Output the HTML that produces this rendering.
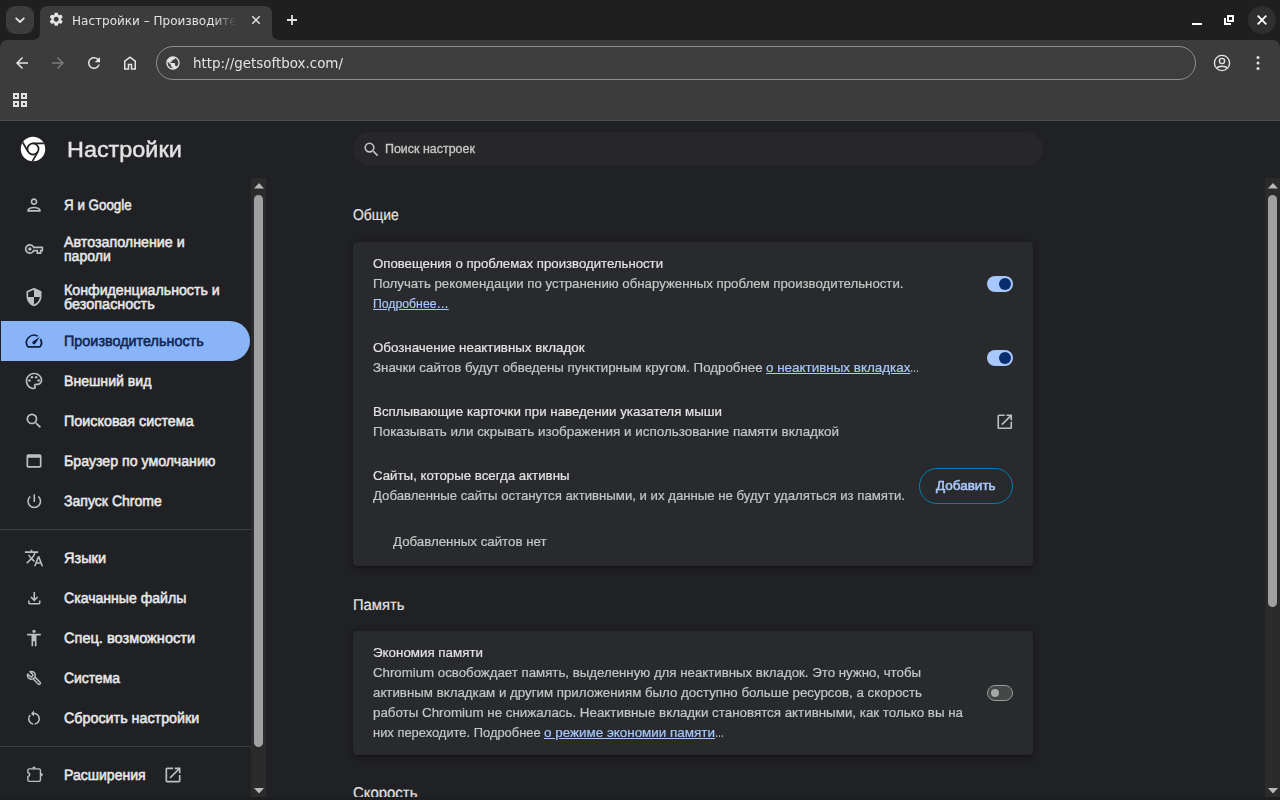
<!DOCTYPE html>
<html lang="ru"><head><meta charset="utf-8"><title>Настройки – Производительность</title>
<style>
*{box-sizing:border-box;margin:0;padding:0}
html,body{width:1280px;height:800px;overflow:hidden;background:#202124}
body{position:relative;font-family:"Liberation Sans",Arial,sans-serif;color:#e3e3e3}
.t{position:absolute;white-space:nowrap;line-height:20px;transform-origin:0 0;display:inline-block}
.fit{left:0;top:-100px;visibility:hidden}
.ic{position:absolute;display:block;overflow:visible}
.wc{position:absolute}
#tabstrip{position:absolute;left:0;top:0;width:1280px;height:40px;background:#1f1f1f}
#tabsearch{position:absolute;left:6px;top:6px;width:28px;height:28px;border-radius:9px;background:#3c3c3c}
#tabshape{position:absolute}
#tabtitlebox{position:absolute;left:71.700px;top:10px;width:166px;height:20px;overflow:hidden;-webkit-mask-image:linear-gradient(90deg,#000 0,#000 141px,transparent 164px);mask-image:linear-gradient(90deg,#000 0,#000 141px,transparent 164px)}
#closebg{position:absolute;left:1248px;top:6px;width:28px;height:28px;border-radius:14px;background:#2f2f2f}
#toolbar{position:absolute;left:0;top:40px;width:1280px;height:81px;background:#3c3c3c;border-radius:8px 8px 0 0;border-bottom:1px solid #4b4d50}
#toolbar .ic, #toolbar .t{margin-top:-40px}
#omnibox{position:absolute;left:156px;top:6px;width:1040px;height:34px;border-radius:17px;border:1px solid #8f8f8f;background:#3d3d3d}
.ui{color:#e3e3e3}
#page{position:absolute;left:0;top:0;width:1280px;height:800px}
.h1{color:#e3e3e3;-webkit-text-stroke:0.450px currentColor}
#search{position:absolute;left:352.500px;top:132px;width:690.500px;height:34px;border-radius:17px;background:#272729}
.mtxt{color:#e8e8e8}
.seltxt{color:#0e2452}
.sec{color:#c4c7c5;-webkit-text-stroke:0.200px currentColor}
.pri{color:#e3e3e3;-webkit-text-stroke:0.200px currentColor}
.sech{color:#e3e3e3;-webkit-text-stroke:0.200px currentColor}
.link{color:#a8c7fa}
.t a{color:#a8c7fa;text-decoration:underline}
#sel{position:absolute;left:1px;top:321px;width:248.500px;height:40px;border-radius:0 20px 20px 0;background:#8ab4f8}
.sep{position:absolute;left:0;width:251px;height:1px;background:#3c4043}
.sbtrack{position:absolute;background:#2b2b2b}
.sbthumb{position:absolute;background:#a0a0a2;border-radius:4.500px}
.card{position:absolute;background:#292a2d;border-radius:4px;box-shadow:0 1px 2px rgba(0,0,0,.3),0 2px 6px 2px rgba(0,0,0,.15)}
.tog{position:absolute;width:26px;height:16px;border-radius:8px}
.tog i{position:absolute;display:block;border-radius:50%}
.tog.on{background:#a8c7fa}
.tog.on i{left:12px;top:2px;width:12px;height:12px;background:#062e6f}
.tog.off{background:#444746;border:1px solid #9a9d9b}
.tog.off i{left:3px;top:3px;width:8px;height:8px;background:#a5a7a6}
#addbtn{position:absolute;left:919px;top:468px;width:94px;height:36px;border-radius:18px;border:1px solid #047db7}
#bottomstrip{position:absolute;left:0;top:797px;width:1280px;height:3px;background:#1d1e20}
.med{-webkit-text-stroke:0.550px currentColor}
.med2{-webkit-text-stroke:0.350px currentColor}
</style></head>
<body>
<div id="tabstrip">
<div id="tabsearch"><svg width="28" height="28" viewBox="0 0 28 28"><path d="M10.2 12.3 L14 16 L17.800 12.3" fill="none" stroke="#e3e3e3" stroke-width="1.8" stroke-linecap="round" stroke-linejoin="round"/></svg></div>
<svg id="tabshape" width="256" height="34" viewBox="0 0 256 34" style="left:28px;top:6px"><path d="M4 34 Q12 34 12 26 L12 8 Q12 0 20 0 L236 0 Q244 0 244 8 L244 26 Q244 34 252 34 Z" fill="#3c3c3c"/></svg>
<svg class="ic" style="left:47.55px;top:11.45px" width="16.5" height="16.5" viewBox="0 0 24 24" fill="#e3e3e3"><path d="M19.14 12.940c.04-.3.06-.61.06-.94 0-.32-.02-.64-.07-.94l2.030-1.580a.49.49 0 0 0 .12-.61l-1.920-3.320a.488.488 0 0 0-.59-.22l-2.390.96c-.5-.38-1.030-.7-1.620-.94l-.36-2.540a.484.484 0 0 0-.48-.41h-3.840c-.24 0-.43.17-.47.41l-.36 2.540c-.59.24-1.130.57-1.620.94l-2.390-.96c-.22-.08-.47 0-.59.22L2.740 8.870c-.12.21-.08.47.12.61l2.030 1.580c-.05.3-.09.63-.09.94s.02.64.07.94l-2.030 1.580a.49.49 0 0 0-.12.61l1.920 3.320c.12.22.37.29.59.22l2.390-.96c.5.38 1.030.7 1.620.94l.36 2.540c.05.24.24.41.48.41h3.840c.24 0 .44-.17.47-.41l.36-2.540c.59-.24 1.130-.56 1.620-.94l2.390.96c.22.08.47 0 .59-.22l1.920-3.320c.12-.22.07-.47-.12-.61l-2.010-1.580zM12 15.600c-1.980 0-3.600-1.620-3.600-3.600s1.620-3.600 3.600-3.600 3.600 1.620 3.600 3.600-1.620 3.600-3.600 3.600z"/></svg>
<div id="tabtitlebox"><span id="tabtitle" class="t ui" style="left:0.00px;top:0.50px;font-size:12px;font-family:'DejaVu Sans', 'Liberation Sans', sans-serif;transform:scaleX(1.0015);">Настройки – Производительность</span></div>
<svg class="ic" style="left:251px;top:15px" width="10" height="10" viewBox="0 0 10 10"><path d="M1.300 1.300 L8.700 8.700 M8.700 1.300 L1.300 8.700" stroke="#e3e3e3" stroke-width="1.500" fill="none"/></svg>
<svg class="ic" style="left:286px;top:14px" width="12" height="12" viewBox="0 0 12 12"><path d="M6 1 V11 M1 6 H11" stroke="#e3e3e3" stroke-width="1.800" fill="none"/></svg>
<div class="wc" style="left:1192px;top:23px;width:10px;height:2px;background:#fff"></div>
<svg class="ic" style="left:1224px;top:15px" width="10" height="10" viewBox="0 0 10 10"><path d="M4 1 H9 V6 H4 Z" fill="none" stroke="#fff" stroke-width="2"/><path d="M1 3 V9 H7" fill="none" stroke="#fff" stroke-width="2"/></svg>
<div id="closebg"></div>
<svg class="ic" style="left:1257px;top:15px" width="10" height="10" viewBox="0 0 10 10"><path d="M0.700 0.700 L9.300 9.300 M9.300 0.700 L0.700 9.300" stroke="#fff" stroke-width="1.800" fill="none"/></svg>
</div>
<div id="toolbar">
<svg class="ic" style="left:13px;top:54px" width="18" height="18" viewBox="0 0 24 24" fill="#e3e3e3"><path d="M20 11H7.83l5.590-5.590L12 4l-8 8 8 8 1.410-1.410L7.830 13H20v-2z"/></svg>
<svg class="ic" style="left:49px;top:54px" width="18" height="18" viewBox="0 0 24 24" fill="#7b7b7b"><path d="M12 4l-1.410 1.410L16.170 11H4v2h12.170l-5.580 5.590L12 20l8-8z"/></svg>
<svg class="ic" style="left:85px;top:54px" width="18" height="18" viewBox="0 0 24 24" fill="#e3e3e3"><path d="M17.65 6.350A7.958 7.958 0 0 0 12 4c-4.420 0-7.990 3.580-7.990 8s3.570 8 7.990 8c3.730 0 6.840-2.550 7.730-6h-2.080A5.990 5.990 0 0 1 12 18c-3.310 0-6-2.690-6-6s2.690-6 6-6c1.660 0 3.140.69 4.220 1.780L13 11h7V4l-2.350 2.350z"/></svg>
<svg class="ic" style="left:121px;top:54px" width="18" height="18" viewBox="0 0 24 24" fill="#e3e3e3"><path d="M6 19h3v-6h6v6h3v-9l-6-4.500L6 10v9zm-2 2V9l8-6 8 6v12h-7v-6h-2v6H4z"/></svg>
<div id="omnibox"></div>
<svg class="ic" style="left:165px;top:55px" width="16" height="16" viewBox="0 0 24 24" fill="#e3e3e3"><path d="M12 2C6.48 2 2 6.480 2 12s4.480 10 10 10 10-4.480 10-10S17.520 2 12 2zm-1 17.930c-3.950-.49-7-3.850-7-7.930 0-.62.08-1.210.21-1.790L9 15v1c0 1.100.9 2 2 2v1.930zm6.900-2.540c-.26-.81-1-1.390-1.900-1.390h-1v-3c0-.55-.45-1-1-1H8v-2h2c.55 0 1-.45 1-1V7h2c1.100 0 2-.9 2-2v-.41c2.930 1.190 5 4.060 5 7.410 0 2.080-.8 3.970-2.100 5.390z"/></svg>
<span id="url" class="t ui" style="left:193.00px;top:52.50px;font-size:14px;font-family:'DejaVu Sans', 'Liberation Sans', sans-serif;transform:scaleX(0.9597);">http://getsoftbox.com/</span>
<svg class="ic" style="left:1212px;top:53px" width="20" height="20" viewBox="0 0 20 20" fill="none" stroke="#e3e3e3" stroke-width="1.400"><circle cx="10" cy="10" r="7.600"/><circle cx="10" cy="8" r="2.600"/><path d="M4.700 15.200 C6.500 12.600 13.500 12.600 15.300 15.200"/></svg>
<svg class="ic" style="left:1255px;top:54px" width="6" height="18" viewBox="0 0 6 18" fill="#e3e3e3"><circle cx="3" cy="3.500" r="1.500"/><circle cx="3" cy="9" r="1.500"/><circle cx="3" cy="14.500" r="1.500"/></svg>
<svg class="ic" style="left:13px;top:93px" width="14" height="14" viewBox="0 0 14 14" fill="none" stroke="#e3e3e3" stroke-width="2"><rect x="1" y="1" width="4" height="4"/><rect x="9" y="1" width="4" height="4"/><rect x="1" y="9" width="4" height="4"/><rect x="9" y="9" width="4" height="4"/></svg>
</div>
<div id="page">
<svg class="ic" id="logo" style="left:20px;top:136px" width="26" height="26" viewBox="-13 -13 26 26"><defs><clipPath id="lc"><circle r="12.25"/></clipPath></defs><circle r="12.25" fill="#fff"/><g clip-path="url(#lc)" stroke="#202124" stroke-width="1.700" fill="none"><circle r="5.60"/><line x1="0" y1="-5.60" x2="11.90" y2="-5.60" transform="rotate(0)"/><line x1="0" y1="-5.60" x2="11.90" y2="-5.60" transform="rotate(120)"/><line x1="0" y1="-5.60" x2="11.90" y2="-5.60" transform="rotate(240)"/></g></svg>
<span id="h1" class="t h1" style="left:66.70px;top:139.70px;font-size:22px;transform:scaleX(1.0633);">Настройки</span>
<div id="search"></div>
<svg class="ic" style="left:361.5px;top:139.5px" width="19" height="19" viewBox="0 0 24 24" fill="#bcbfc0"><path d="M15.5 14h-.79l-.28-.27A6.471 6.471 0 0 0 16 9.5 6.5 6.5 0 1 0 9.5 16c1.61 0 3.090-.59 4.230-1.570l.27.280v.79l5 4.990L20.490 19l-4.990-5zm-6 0C7.010 14 5 11.990 5 9.500S7.010 5 9.500 5 14 7.010 14 9.500 11.990 14 9.500 14z"/></svg>
<span id="searchph" class="t med2 sec" style="left:384.80px;top:138.80px;font-size:12.5px;transform:scaleX(0.9959);">Поиск настроек</span>
<div id="menu">
<div id="sel"></div>
<svg class="ic" style="left:24px;top:195px" width="20" height="20" viewBox="0 0 24 24" fill="#bcbfc0"><path d="M12 6c1.1 0 2 .9 2 2s-.9 2-2 2-2-.9-2-2 .9-2 2-2m0 10c2.7 0 5.8 1.29 6 2H6c.23-.72 3.31-2 6-2m0-12C9.79 4 8 5.79 8 8s1.79 4 4 4 4-1.79 4-4-1.79-4-4-4zm0 10c-2.67 0-8 1.34-8 4v2h16v-2c0-2.66-5.33-4-8-4z"/></svg>
<span id="m1_0" class="t med mtxt" style="left:64.30px;top:194.60px;font-size:15px;transform:scaleX(0.8915) skewX(0.05deg);">Я и Google</span>
<svg class="ic" style="left:24px;top:239px" width="20" height="20" viewBox="0 -960 960 960" fill="#bcbfc0"><path fill-rule="evenodd" d="M280-240q-100 0-170-70T40-480q0-100 70-170t170-70q66 0 121 33t87 87h432v240h-80v120H600v-120H488q-32 54-87 87t-121 33Zm0-80q66 0 106-40.500t48-79.500h246v120h80v-120h80v-80H434q-8-39-48-79.500T280-640q-66 0-113 47t-47 113q0 66 47 113t113 47Zm0-80q33 0 56.500-23.500T360-480q0-33-23.500-56.500T280-560q-33 0-56.500 23.500T200-480q0 33 23.500 56.500T280-400Z"/></svg>
<span id="m2_0" class="t med mtxt" style="left:64.30px;top:231.60px;font-size:15px;transform:scaleX(0.9517) skewX(0.05deg);">Автозаполнение и</span>
<span id="m2_1" class="t med mtxt" style="left:64.30px;top:245.60px;font-size:15px;transform:scaleX(0.9366) skewX(0.05deg);">пароли</span>
<svg class="ic" style="left:24px;top:287px" width="20" height="20" viewBox="0 0 24 24" fill="#bcbfc0"><path d="M12 1L3 5v6c0 5.55 3.84 10.74 9 12 5.16-1.26 9-6.45 9-12V5l-9-4zm0 10.99h7c-.53 4.12-3.28 7.79-7 8.94V12H5V6.3l7-3.11v8.8z"/></svg>
<span id="m3_0" class="t med mtxt" style="left:64.30px;top:279.60px;font-size:15px;transform:scaleX(0.9453) skewX(0.05deg);">Конфиденциальность и</span>
<span id="m3_1" class="t med mtxt" style="left:64.30px;top:293.60px;font-size:15px;transform:scaleX(0.9620) skewX(0.05deg);">безопасность</span>
<svg class="ic" style="left:24px;top:331px" width="20" height="20" viewBox="0 0 24 24" fill="#0b1c3d"><path d="M20.38 8.57l-1.23 1.85a8 8 0 0 1-.22 7.58H5.07A8 8 0 0 1 15.58 6.85l1.85-1.23A10 10 0 0 0 3.350 19a2 2 0 0 0 1.72 1h13.85a2 2 0 0 0 1.74-1 10 10 0 0 0-.27-10.44zm-9.79 6.84a2 2 0 0 0 2.83 0l5.660-8.490-8.490 5.660a2 2 0 0 0 0 2.830z"/></svg>
<span id="m4_0" class="t med seltxt" style="left:64.30px;top:330.60px;font-size:15px;transform:scaleX(0.9594) skewX(0.05deg);">Производительность</span>
<svg class="ic" style="left:24px;top:371px" width="20" height="20" viewBox="0 0 24 24" fill="#bcbfc0"><path d="M12 22C6.49 22 2 17.51 2 12S6.49 2 12 2s10 4.04 10 9c0 3.31-2.69 6-6 6h-1.77c-.28 0-.5.22-.5.5 0 .12.05.23.13.33.41.47.64 1.06.64 1.67A2.5 2.5 0 0 1 12 22zm0-18c-4.41 0-8 3.59-8 8s3.59 8 8 8c.28 0 .5-.22.5-.5a.54.54 0 0 0-.14-.35c-.41-.46-.63-1.05-.63-1.65a2.5 2.5 0 0 1 2.5-2.500H16c2.210 0 4-1.790 4-4 0-3.860-3.590-7-8-7z"/><circle cx="6.500" cy="11.500" r="1.500"/><circle cx="9.500" cy="7.500" r="1.500"/><circle cx="14.500" cy="7.500" r="1.500"/><circle cx="17.500" cy="11.500" r="1.500"/></svg>
<span id="m5_0" class="t med mtxt" style="left:64.30px;top:370.60px;font-size:15px;transform:scaleX(0.9403) skewX(0.05deg);">Внешний вид</span>
<svg class="ic" style="left:24px;top:411px" width="20" height="20" viewBox="0 0 24 24" fill="#bcbfc0"><path d="M15.5 14h-.79l-.28-.27A6.471 6.471 0 0 0 16 9.5 6.5 6.5 0 1 0 9.5 16c1.61 0 3.090-.59 4.230-1.570l.27.280v.79l5 4.990L20.490 19l-4.990-5zm-6 0C7.010 14 5 11.990 5 9.500S7.010 5 9.500 5 14 7.010 14 9.500 11.990 14 9.500 14z"/></svg>
<span id="m6_0" class="t med mtxt" style="left:64.30px;top:410.60px;font-size:15px;transform:scaleX(0.9564) skewX(0.05deg);">Поисковая система</span>
<svg class="ic" style="left:24px;top:451px" width="20" height="20" viewBox="0 0 24 24" fill="#bcbfc0"><path d="M19 4H5c-1.11 0-2 .9-2 2v12c0 1.1.89 2 2 2h14c1.1 0 2-.9 2-2V6c0-1.1-.89-2-2-2zm0 14H5V8h14v10z"/></svg>
<span id="m7_0" class="t med mtxt" style="left:64.30px;top:450.60px;font-size:15px;transform:scaleX(0.9456) skewX(0.05deg);">Браузер по умолчанию</span>
<svg class="ic" style="left:24.7px;top:491.7px" width="18.6" height="18.6" viewBox="0 0 24 24" fill="#bcbfc0"><path d="M13 3h-2v10h2V3zm4.83 2.170l-1.420 1.420C17.990 7.860 19 9.810 19 12c0 3.870-3.130 7-7 7s-7-3.130-7-7c0-2.190 1.010-4.140 2.580-5.420L6.170 5.170C4.230 6.820 3 9.260 3 12c0 4.970 4.030 9 9 9s9-4.030 9-9c0-2.740-1.230-5.180-3.170-6.830z"/></svg>
<span id="m8_0" class="t med mtxt" style="left:64.30px;top:490.60px;font-size:15px;transform:scaleX(0.9373) skewX(0.05deg);">Запуск Chrome</span>
<svg class="ic" style="left:24px;top:548px" width="20" height="20" viewBox="0 0 24 24" fill="#bcbfc0"><path d="M12.87 15.070l-2.540-2.510.03-.03A17.520 17.520 0 0 0 14.070 6H17V4h-7V2H8v2H1v1.990h11.170C11.500 7.920 10.440 9.750 9 11.350 8.070 10.320 7.300 9.190 6.690 8h-2c.73 1.630 1.730 3.170 2.980 4.560l-5.090 5.020L4 19l5-5 3.110 3.110.76-2.040zM18.500 10h-2L12 22h2l1.120-3h4.750L21 22h2l-4.500-12zm-2.620 7l1.620-4.330L19.120 17h-3.240z"/></svg>
<span id="m9_0" class="t med mtxt" style="left:64.30px;top:547.60px;font-size:15px;transform:scaleX(0.9689) skewX(0.05deg);">Языки</span>
<svg class="ic" style="left:24.7px;top:588.7px" width="18.6" height="18.6" viewBox="0 0 24 24" fill="#bcbfc0"><path d="M12 16l-5-5 1.4-1.450 2.600 2.600V4h2v8.150l2.600-2.600L17 11l-5 5zm-6 4q-.825 0-1.413-.587Q4 18.825 4 18v-3h2v3h12v-3h2v3q0 .825-.587 1.413Q18.825 20 18 20H6z"/></svg>
<span id="m10_0" class="t med mtxt" style="left:64.30px;top:587.60px;font-size:15px;transform:scaleX(0.9381) skewX(0.05deg);">Скачанные файлы</span>
<svg class="ic" style="left:24px;top:628px" width="20" height="20" viewBox="0 0 24 24" fill="#bcbfc0"><path d="M12 2c1.1 0 2 .9 2 2s-.9 2-2 2-2-.9-2-2 .9-2 2-2zm8.200 7H15v13h-2v-6h-2v6H9V9H3.800V7h16.400v2z"/></svg>
<span id="m11_0" class="t med mtxt" style="left:64.30px;top:627.60px;font-size:15px;transform:scaleX(0.9711) skewX(0.05deg);">Спец. возможности</span>
<svg class="ic" style="left:24px;top:668px" width="20" height="20" viewBox="0 0 20 20" fill="none" stroke="#bcbfc0" stroke-width="1.500" stroke-linejoin="round"><g transform="translate(7.350 7.300) rotate(45)"><path d="M-3.53 1.65 A3.9 3.9 0 1 0 -3.53 -1.65 L-0.300 -1.65 A1.65 1.65 0 0 1 -0.300 1.65 Z"/><path d="M4.200 -1.300 H11 A1.300 1.300 0 0 1 11 1.300 H4.200"/></g></svg>
<span id="m12_0" class="t med mtxt" style="left:64.30px;top:667.60px;font-size:15px;transform:scaleX(0.9282) skewX(0.05deg);">Система</span>
<svg class="ic" style="left:25.2px;top:709px" width="18" height="18" viewBox="0 0 24 24" fill="#bcbfc0"><path d="M12 5V2L8 6l4 4V7c3.31 0 6 2.690 6 6 0 2.970-2.170 5.430-5 5.910v2.020c3.950-.49 7-3.850 7-7.930 0-4.420-3.580-8-8-8zm-6 8c0-1.650.67-3.150 1.760-4.240L6.340 7.340A8.014 8.014 0 0 0 4 13c0 4.080 3.050 7.440 7 7.930v-2.020c-2.830-.48-5-2.940-5-5.910z"/></svg>
<span id="m13_0" class="t med mtxt" style="left:64.30px;top:707.60px;font-size:15px;transform:scaleX(0.9538) skewX(0.05deg);">Сбросить настройки</span>
<svg class="ic" style="left:24px;top:764.8px" width="20" height="20" viewBox="0 0 20 20" fill="none" stroke="#bcbfc0" stroke-width="1.400" stroke-linejoin="round"><path d="M5.350 3.850 H14.950 Q16.450 3.850 16.450 5.350 V14.850 Q16.450 16.350 14.950 16.350 H5.350 Q3.850 16.350 3.850 14.850 V11.400 A1.800 1.800 0 0 0 3.850 7.800 V5.350 Q3.850 3.850 5.350 3.850 Z"/><path d="M8.300 3.500 A1.700 2.100 0 0 1 11.700 3.500 Z M16.800 7.900 A2.100 1.700 0 0 1 16.800 11.300 Z" fill="#bcbfc0" stroke="none"/></svg>
<span id="m14_0" class="t med mtxt" style="left:64.30px;top:764.60px;font-size:15px;transform:scaleX(0.9364) skewX(0.05deg);">Расширения</span>
<svg class="ic" style="left:163px;top:765px" width="20" height="20" viewBox="0 0 24 24" fill="#bcbfc0"><path d="M19 19H5V5h7V3H5c-1.110 0-2 .9-2 2v14c0 1.100.89 2 2 2h14c1.100 0 2-.9 2-2v-7h-2v7zM14 3v2h3.590l-9.830 9.830 1.410 1.410L19 6.410V10h2V3h-7z"/></svg>
<div class="sep" style="top:529px"></div><div class="sep" style="top:746px"></div>
<div class="sbtrack" style="left:251px;top:178px;width:15px;height:622px"></div>
<div class="sbthumb" style="left:254px;top:195px;width:9px;height:552px"></div>
<svg class="ic" style="left:253.500px;top:182.500px" width="10" height="6" viewBox="0 0 10 6"><path d="M5 0 L10 5.500 L0 5.500 Z" fill="#b8b8b8"/></svg>
<svg class="ic" style="left:253.500px;top:788px" width="10" height="6" viewBox="0 0 10 6"><path d="M0 0 L10 0 L5 5.500 Z" fill="#b8b8b8"/></svg>
</div>
<div id="main">
<span id="sec1" class="t sech" style="left:352.60px;top:205.40px;font-size:15.6px;transform:scaleX(0.8909) skewX(0.05deg);">Общие</span>
<div class="card" style="left:353px;top:242px;width:680px;height:324px"></div>
<span id="r1t" class="t pri" style="left:373.00px;top:253.80px;font-size:13px;transform:scaleX(1.0143);">Оповещения о проблемах производительности</span>
<span id="r1d" class="t sec" style="left:373.00px;top:273.80px;font-size:13px;transform:scaleX(1.0176);">Получать рекомендации по устранению обнаруженных проблем производительности.</span>
<span id="r1l" class="t sec" style="left:373.00px;top:293.80px;font-size:13px;transform:scaleX(0.9419);"><a>Подробнее…</a></span>
<div class="tog on" style="left:987px;top:276px"><i></i></div>
<span id="r2t" class="t pri" style="left:373.00px;top:337.80px;font-size:13px;transform:scaleX(1.0251);">Обозначение неактивных вкладок</span>
<span id="r2d" class="t sec" style="left:373.00px;top:357.80px;font-size:13px;transform:scaleX(1.0234);">Значки сайтов будут обведены пунктирным кругом. Подробнее</span>
<span id="r2da" class="t sec" style="left:765.90px;top:357.80px;font-size:13px;transform:scaleX(1.0320);"><a>о неактивных вкладках</a></span>
<span id="r2de" class="t sec" style="left:910.30px;top:357.80px;font-size:13px;transform:scaleX(0.7077);">…</span>
<div class="tog on" style="left:987px;top:350px"><i></i></div>
<span id="r3t" class="t pri" style="left:373.00px;top:401.80px;font-size:13px;transform:scaleX(1.0244);">Всплывающие карточки при наведении указателя мыши</span>
<span id="r3d" class="t sec" style="left:373.00px;top:421.80px;font-size:13px;transform:scaleX(1.0342);">Показывать или скрывать изображения и использование памяти вкладкой</span>
<svg class="ic" style="left:994.8px;top:411.9px" width="19.5" height="19.5" viewBox="0 0 24 24" fill="#bcbfc0"><path d="M19 19H5V5h7V3H5c-1.110 0-2 .9-2 2v14c0 1.100.89 2 2 2h14c1.100 0 2-.9 2-2v-7h-2v7zM14 3v2h3.590l-9.830 9.830 1.410 1.410L19 6.410V10h2V3h-7z"/></svg>
<span id="r4t" class="t pri" style="left:373.00px;top:465.80px;font-size:13px;transform:scaleX(1.0204);">Сайты, которые всегда активны</span>
<span id="r4d" class="t sec" style="left:373.00px;top:485.80px;font-size:13px;transform:scaleX(1.0138);">Добавленные сайты останутся активными, и их данные не будут удаляться из памяти.</span>
<div id="addbtn"></div>
<span id="addtxt" class="t med link" style="left:936.00px;top:475.80px;font-size:13px;transform:scaleX(1.0374);">Добавить</span>
<span id="r5" class="t sec" style="left:393.00px;top:531.80px;font-size:13px;transform:scaleX(1.0214);">Добавленных сайтов нет</span>
<span id="sec2" class="t sech" style="left:352.60px;top:594.50px;font-size:15.6px;transform:scaleX(0.9461) skewX(0.05deg);">Память</span>
<div class="card" style="left:353px;top:631px;width:680px;height:124px"></div>
<span id="c2t" class="t pri" style="left:373.00px;top:642.80px;font-size:13px;transform:scaleX(1.0267);">Экономия памяти</span>
<span id="c2d1" class="t sec" style="left:373.00px;top:662.80px;font-size:13px;transform:scaleX(1.0193);">Chromium освобождает память, выделенную для неактивных вкладок. Это нужно, чтобы</span>
<span id="c2d2" class="t sec" style="left:373.00px;top:682.80px;font-size:13px;transform:scaleX(1.0222);">активным вкладкам и другим приложениям было доступно больше ресурсов, а скорость</span>
<span id="c2d3" class="t sec" style="left:373.00px;top:702.80px;font-size:13px;transform:scaleX(1.0264);">работы Chromium не снижалась. Неактивные вкладки становятся активными, как только вы на</span>
<span id="c2d4" class="t sec" style="left:373.00px;top:722.80px;font-size:13px;transform:scaleX(0.9933);">них переходите. Подробнее</span>
<span id="c2d4a" class="t sec" style="left:544.00px;top:722.80px;font-size:13px;transform:scaleX(1.0329);"><a>о режиме экономии памяти</a></span>
<span id="c2d4e" class="t sec" style="left:715.00px;top:722.80px;font-size:13px;transform:scaleX(0.6923);">…</span>
<div class="tog off" style="left:987px;top:685px"><i></i></div>
<span id="sec3" class="t sech" style="left:352.60px;top:783.30px;font-size:15.6px;transform:scaleX(0.9561) skewX(0.05deg);">Скорость</span>
<div class="sbtrack" style="left:1265px;top:178px;width:15px;height:622px"></div>
<div class="sbthumb" style="left:1268px;top:195px;width:9px;height:412px"></div>
<svg class="ic" style="left:1267.500px;top:182.500px" width="10" height="6" viewBox="0 0 10 6"><path d="M5 0 L10 5.500 L0 5.500 Z" fill="#b8b8b8"/></svg>
<svg class="ic" style="left:1267.500px;top:788px" width="10" height="6" viewBox="0 0 10 6"><path d="M0 0 L10 0 L5 5.500 Z" fill="#b8b8b8"/></svg>
</div>
<div id="bottomstrip"></div>
</div>
</body></html>
